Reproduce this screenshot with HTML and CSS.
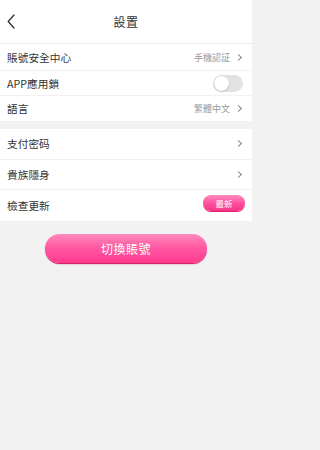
FILE: index.html
```html
<!DOCTYPE html>
<html lang="zh-Hant">
<head>
<meta charset="utf-8">
<title>設置</title>
<link rel="stylesheet" href="styles.css">
</head>
<body>
<div class="page">
  <header class="topbar">
    <span class="back">
      <svg width="8" height="15" viewBox="0 0 8 15"><path d="M7 1 L1.2 7.5 L7 14" fill="none" stroke="#333" stroke-width="1.3" stroke-linecap="round" stroke-linejoin="round"/></svg>
    </span>
    <h1 class="title">設置</h1>
  </header>

  <section class="group group-a">
    <div class="row">
      <span class="label">賬號安全中心</span>
      <span class="value">手機認証<i class="chev"></i></span>
    </div>
    <div class="row">
      <span class="label">APP應用鎖</span>
      <span class="toggle"><span class="knob"></span></span>
    </div>
    <div class="row">
      <span class="label">語言</span>
      <span class="value">繁體中文<i class="chev"></i></span>
    </div>
  </section>

  <section class="group group-b">
    <div class="row">
      <span class="label">支付密码</span>
      <span class="value"><i class="chev"></i></span>
    </div>
    <div class="row">
      <span class="label">貴族隱身</span>
      <span class="value"><i class="chev"></i></span>
    </div>
    <div class="row">
      <span class="label">檢查更新</span>
      <span class="pill">最新</span>
    </div>
  </section>

  <div class="action">
    <button class="switch">切換賬號</button>
  </div>
</div>
</body>
</html>
```

FILE: styles.css
```css
* { box-sizing: border-box; }
html, body { margin: 0; padding: 0; }
body {
  background: #f2f2f2;
  font-family: "Noto Sans CJK TC", "Noto Sans CJK SC", "Noto Sans", sans-serif;
  color: #333;
}
.page {
  width: 252px;
  height: 450px;
  overflow: hidden;
}
.topbar {
  height: 44px;
  background: #fff;
  border-bottom: 1px solid #ececec;
  display: flex;
  align-items: center;
  justify-content: center;
  position: relative;
}
.back {
  position: absolute;
  left: 7px;
  top: 14px;
  display: flex;
}
.title {
  margin: 0;
  font-size: 12px;
  font-weight: 400;
  color: #333;
  letter-spacing: 0.5px;
}
.group {
  background: #fff;
}
.group-b { margin-top: 8px; }
.row {
  display: flex;
  align-items: center;
  justify-content: space-between;
  padding: 0 9px 0 7px;
  border-bottom: 1px solid #f1f1f1;
}
.row:last-child { border-bottom: none; }
.group-a .row { height: 25px; }
.group-a .row:first-child { height: 27px; }
.group-b .row { height: 30.7px; }
.label {
  font-size: 10.7px;
  color: #333;
}
.value {
  display: flex;
  align-items: center;
  font-size: 9px;
  color: #9a9a9a;
}
.chev {
  display: inline-block;
  width: 5px;
  height: 5px;
  border-top: 1px solid #888;
  border-right: 1px solid #888;
  transform: rotate(45deg);
  margin-left: 6px;
  margin-right: 2px;
}
.toggle {
  width: 30px;
  height: 17px;
  border-radius: 9px;
  background: #e3e3e3;
  display: flex;
  align-items: center;
  padding: 1px;
}
.knob {
  width: 15px;
  height: 15px;
  border-radius: 50%;
  background: #fff;
  box-shadow: 0 0.5px 1.5px rgba(0,0,0,0.25);
}
.pill {
  width: 42px;
  height: 16px;
  border-radius: 8px;
  background: linear-gradient(#ff8fc0, #ff4d9b 55%, #f5358a);
  box-shadow: 0 1px 0 #d8246c;
  color: #fff;
  font-size: 8.5px;
  display: flex;
  align-items: center;
  justify-content: center;
  margin-right: -2px;
  margin-bottom: 6px;
}
.action {
  display: flex;
  justify-content: center;
  padding-top: 13px;
}
.switch {
  width: 162px;
  height: 29px;
  border: none;
  border-radius: 15px;
  background: linear-gradient(#ff8bbd, #ff5aa3 45%, #ff3a8e);
  box-shadow: 0 1px 0 #d42466, 0 1.5px 1px rgba(180,20,80,0.3);
  color: #fff;
  font-family: inherit;
  font-size: 12px;
  letter-spacing: 0.5px;
  padding: 0;
}
```
